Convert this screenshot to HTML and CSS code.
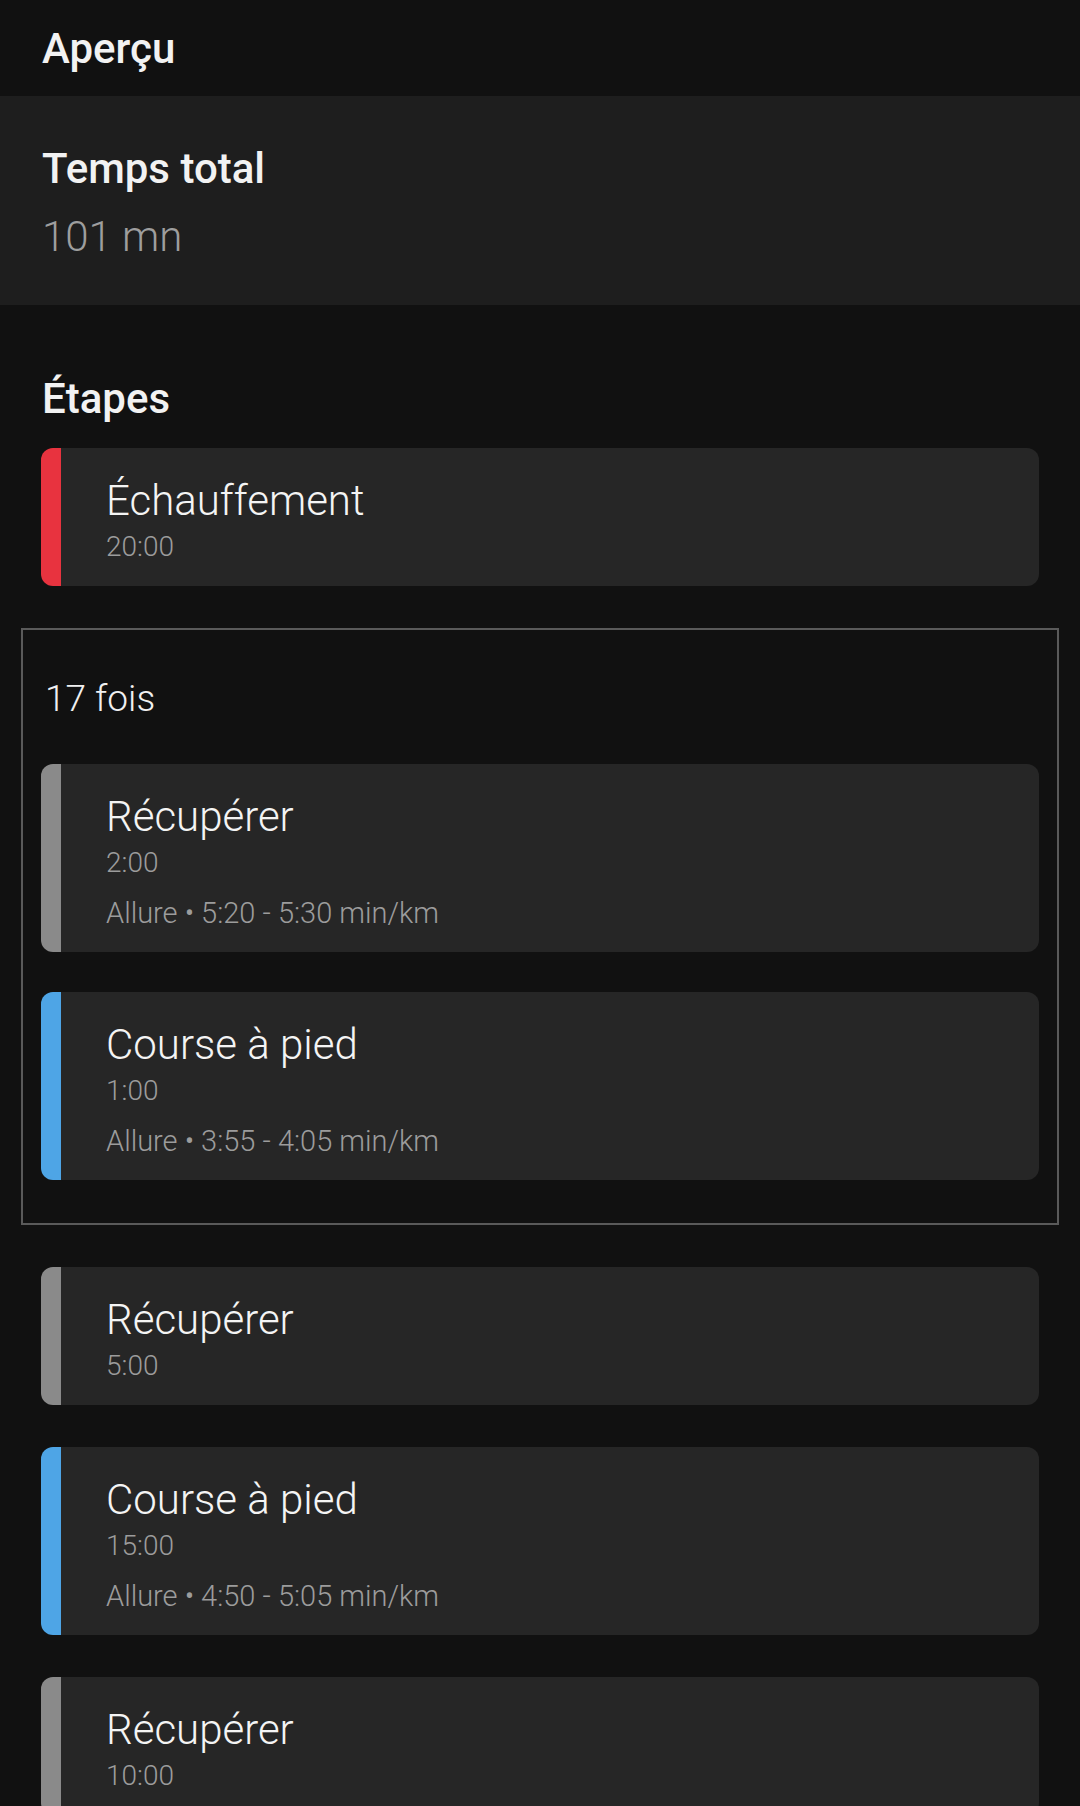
FILE: index.html
```html
<!DOCTYPE html>
<html lang="fr">
  <head>
    <meta charset="UTF-8" />
    <meta name="viewport" content="width=device-width, initial-scale=1" />
    <title>Aperçu</title>
    <link rel="stylesheet" href="styles.css">
  </head>
  <body>
    <header class="topbar">
      <h1>Aperçu</h1>
    </header>

    <section class="total">
      <h2>Temps total</h2>
      <p class="total-value">101 mn</p>
    </section>

    <main class="steps">
      <h2 class="steps-title">Étapes</h2>

      <div class="step warmup">
        <div class="step-name">Échauffement</div>
        <div class="step-detail">20:00</div>
      </div>

      <!-- bloc de répétition -->
      <div class="repeat">
        <p class="repeat-count">17 fois</p>
        <div class="step recover">
          <div class="step-name">Récupérer</div>
          <div class="step-detail">2:00</div>
          <div class="step-detail step-pace">Allure • 5:20 - 5:30 min/km</div>
        </div>
        <div class="step run">
          <div class="step-name">Course à pied</div>
          <div class="step-detail">1:00</div>
          <div class="step-detail step-pace">Allure • 3:55 - 4:05 min/km</div>
        </div>
      </div>

      <div class="step recover">
        <div class="step-name">Récupérer</div>
        <div class="step-detail">5:00</div>
      </div>

      <div class="step run">
        <div class="step-name">Course à pied</div>
        <div class="step-detail">15:00</div>
        <div class="step-detail step-pace">Allure • 4:50 - 5:05 min/km</div>
      </div>

      <div class="step recover">
        <div class="step-name">Récupérer</div>
        <div class="step-detail">10:00</div>
      </div>
    </main>
  </body>
</html>
```

FILE: styles.css
```css
body {
  margin: 0;
  background-color: #111111;
  color: #f2f2f2;
  font-family: Roboto, "Noto Sans", sans-serif;
}

h1,
h2,
p {
  margin: 0;
}

.topbar {
  height: 96px;
  padding: 0 42px;
  background-color: #111111;
}
.topbar h1 {
  font-size: 42px;
  font-weight: 500;
  line-height: 98px;
}

/* Temps total */
.total {
  background-color: #1e1e1e;
  padding: 48px 42px 43px;
}
.total h2 {
  font-size: 42px;
  font-weight: 500;
  line-height: 50px;
}
.total-value {
  margin-top: 18px;
  font-size: 42px;
  font-weight: 300;
  line-height: 50px;
  color: #9e9e9e;
}

/* Étapes */
.steps {
  padding: 69px 0 40px;
}
.steps-title {
  margin: 0 42px 24px;
  font-size: 42px;
  font-weight: 500;
  line-height: 50px;
}

.step {
  margin: 0 41px 42px;
  padding: 28px 20px 18px 45px;
  background-color: #262626;
  border-left: 20px solid #8a8a8a;
  border-radius: 12px;
}
.step.warmup {
  border-left-color: #e8333f;
}
.step.recover {
  border-left-color: #8a8a8a;
}
.step.run {
  border-left-color: #4ea5e6;
}

.step-name {
  font-size: 42px;
  font-weight: 300;
  line-height: 50px;
  color: #f4f4f4;
}
.step-detail {
  font-size: 28px;
  font-weight: 300;
  line-height: 42px;
  color: #9c9c9c;
}
.step-pace {
  margin-top: 8px;
  font-size: 29px;
}

/* Bloc de répétition */
.repeat {
  margin: 0 21px 42px;
  padding: 47px 18px 3px;
  border: 2px solid #5a5a5a;
}
.repeat .step {
  margin: 0 0 40px;
}
.repeat-count {
  margin-bottom: 43px;
  padding-left: 4px;
  font-size: 37px;
  font-weight: 300;
  line-height: 44px;
  color: #f0f0f0;
}
```
